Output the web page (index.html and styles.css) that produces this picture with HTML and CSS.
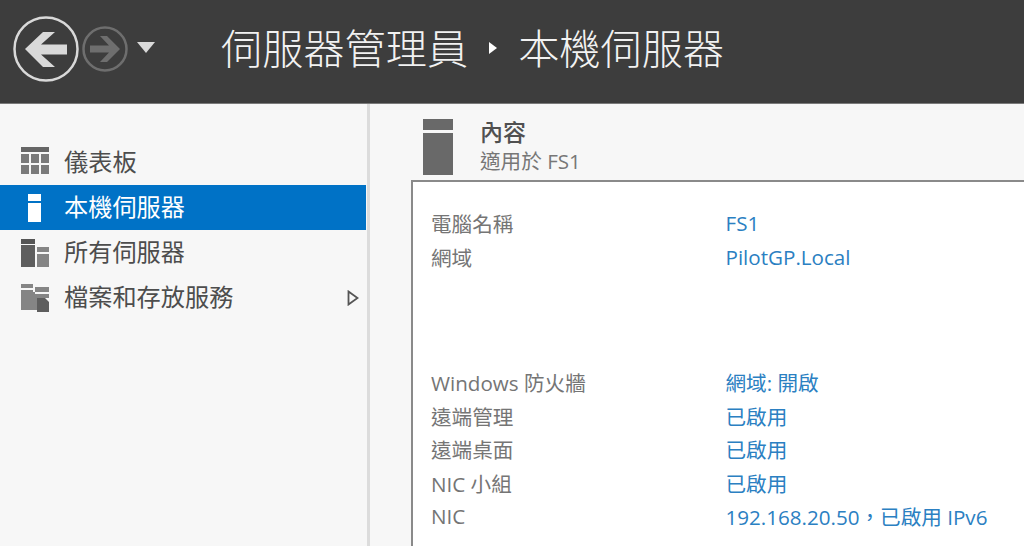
FILE: index.html
```html
<!DOCTYPE html>
<html lang="zh-Hant">
<head>
<meta charset="utf-8">
<title>伺服器管理員</title>
<link rel="stylesheet" href="styles.css">
</head>
<body>
<header class="topbar">
  <svg class="nav-back" viewBox="0 0 66 66" width="66" height="66"><circle cx="33" cy="33" r="31.5" fill="none" stroke="#d9d9d9" stroke-width="2.5"/><path d="M12 33 L30 16 H42 L28 28.5 H54 V38.5 H28 L42 51 H30 Z" fill="#d9d9d9"/></svg>
  <svg class="nav-fwd" viewBox="0 0 46 46" width="46" height="46"><circle cx="23" cy="23" r="21.5" fill="none" stroke="#6e6e6e" stroke-width="2.5"/><path d="M38 23 L25 10 H18 L27 19.5 H8 V26.5 H27 L18 36 H25 Z" fill="#6e6e6e"/></svg>
  <svg class="nav-drop" viewBox="0 0 18 12" width="18" height="12"><path d="M0 0 H18 L9 11 Z" fill="#d9d9d9"/></svg>
  <h1 class="crumbs"><span>伺服器管理員</span><svg class="crumb-sep" viewBox="0 0 8 12" width="8" height="12"><path d="M0 0 L8 6 L0 12 Z" fill="#fff"/></svg><span>本機伺服器</span></h1>
</header>
<div class="main">
  <nav class="sidebar">
    <a class="nav-item"><svg class="ico ico-up" viewBox="0 0 28 28" width="28" height="28"><path d="M0 0H28V5H0Z" fill="#666"/><path d="M0 7H8V16H0ZM10 7H18V16H10ZM20 7H28V16H20ZM0 18H8V27H0ZM10 18H18V27H10ZM20 18H28V27H20Z" fill="#7a7a7a"/></svg><span>儀表板</span></a>
    <a class="nav-item active"><svg class="ico" viewBox="0 0 28 28" width="28" height="28"><path d="M7 0H20V7H7ZM7 9H20V28H7Z" fill="#fff"/></svg><span>本機伺服器</span></a>
    <a class="nav-item"><svg class="ico" viewBox="0 0 28 28" width="28" height="28"><path d="M0 0H14V5H0Z" fill="#555"/><path d="M0 6H14V28H0Z" fill="#5e5e5e"/><path d="M16 8H28V13H16ZM16 15H28V28H16Z" fill="#858585"/></svg><span>所有伺服器</span></a>
    <a class="nav-item"><svg class="ico" viewBox="0 0 28 28" width="28" height="28"><path d="M0 0H12V4H0ZM14 3H28V8H14ZM0 6H12V8H14V10H28V14H16V26H0Z" fill="#858585"/><path d="M16 14H24L28 18V28H16Z" fill="#5e5e5e"/></svg><span>檔案和存放服務</span><svg class="chev" viewBox="0 0 12 16" width="12" height="16"><path d="M1.5 1.5 L10.5 8 L1.5 14.5 Z" fill="none" stroke="#555" stroke-width="1.8"/></svg></a>
  </nav>
  <section class="content">
    <div class="pane-head">
      <svg class="pane-ico" viewBox="0 0 30 56" width="30" height="56"><path d="M0 0H30V11H0Z" fill="#696969"/><path d="M0 14H30V56H0Z" fill="#696969"/></svg>
      <div class="pane-titles">
        <div class="pane-title">內容</div>
        <div class="pane-sub">適用於 FS1</div>
      </div>
    </div>
    <div class="props">
      <div class="group">
        <div class="row"><span class="k">電腦名稱</span><a class="v">FS1</a></div>
        <div class="row"><span class="k">網域</span><a class="v">PilotGP.Local</a></div>
      </div>
      <div class="group">
        <div class="row"><span class="k">Windows 防火牆</span><a class="v">網域: 開啟</a></div>
        <div class="row"><span class="k">遠端管理</span><a class="v">已啟用</a></div>
        <div class="row"><span class="k">遠端桌面</span><a class="v">已啟用</a></div>
        <div class="row"><span class="k">NIC 小組</span><a class="v">已啟用</a></div>
        <div class="row"><span class="k">NIC</span><a class="v">192.168.20.50，已啟用 IPv6</a></div>
      </div>
    </div>
  </section>
</div>
</body>
</html>
```
FILE: styles.css
```css
* { box-sizing: border-box; }
html, body { margin: 0; height: 100%; overflow: hidden; }
body {
  width: 1024px; height: 546px; background: #f7f7f7;
  font-family: "Open Sans", "Noto Sans CJK TC", sans-serif;
  display: flex; flex-direction: column;
}
.topbar {
  height: 104px; flex: none; background: #3d3d3d;
  border-bottom: 1px solid #7a7a7a;
  display: flex; align-items: center; padding: 0 0 6px 13px;
}
.nav-back { flex: none; }
.nav-fwd { flex: none; margin-left: 3px; }
.nav-drop { flex: none; margin-left: 9px; margin-top: -2px; }
.crumbs {
  margin: 0 0 0 66px; display: flex; align-items: center;
  font-size: 41.2px; font-weight: 300; color: #f2f2f2; line-height: 1;
}
.crumb-sep { margin: 0 21px 0 21px; }
.main { flex: 1; display: flex; min-height: 0; }
.sidebar {
  width: 370px; flex: none; padding: 36px 1px 0 0;
  border-right: 3px solid #dcdcdc;
}
.nav-item {
  height: 45px; display: flex; align-items: center; padding-left: 21px;
  font-size: 24.2px; color: #4d4d4d;
}
.nav-item .ico { flex: none; margin-right: 15px; }
.nav-item .ico-up { margin-top: -3px; }
.nav-item > span { margin-bottom: 4px; }
.nav-item.active { background: #0072c6; color: #fff; }
.chev { margin-left: auto; margin-right: 7px; }
.content { flex: 1; min-width: 0; padding: 15px 0 0 41px; display: flex; flex-direction: column; }
.pane-head { display: flex; padding-left: 12px; height: 61px; flex: none; }
.pane-ico { flex: none; margin-right: 27px; }
.pane-titles { display: flex; flex-direction: column; }
.pane-title { font-size: 23px; font-weight: 500; color: #505050; line-height: 27px; }
.pane-sub { font-size: 20.6px; color: #777; line-height: 30px; }
.props {
  flex: 1; background: #fff; border: 2px solid #8a8a8a; border-right: 0; border-bottom: 0;
  padding: 24.5px 0 0 18px;
}
.group + .group { margin-top: 92px; }
.row { display: grid; grid-template-columns: 294.5px 1fr; height: 33.5px; align-items: center; font-size: 20.6px; }
.k { color: #757575; }
.v { color: #2b80c2; }
```
